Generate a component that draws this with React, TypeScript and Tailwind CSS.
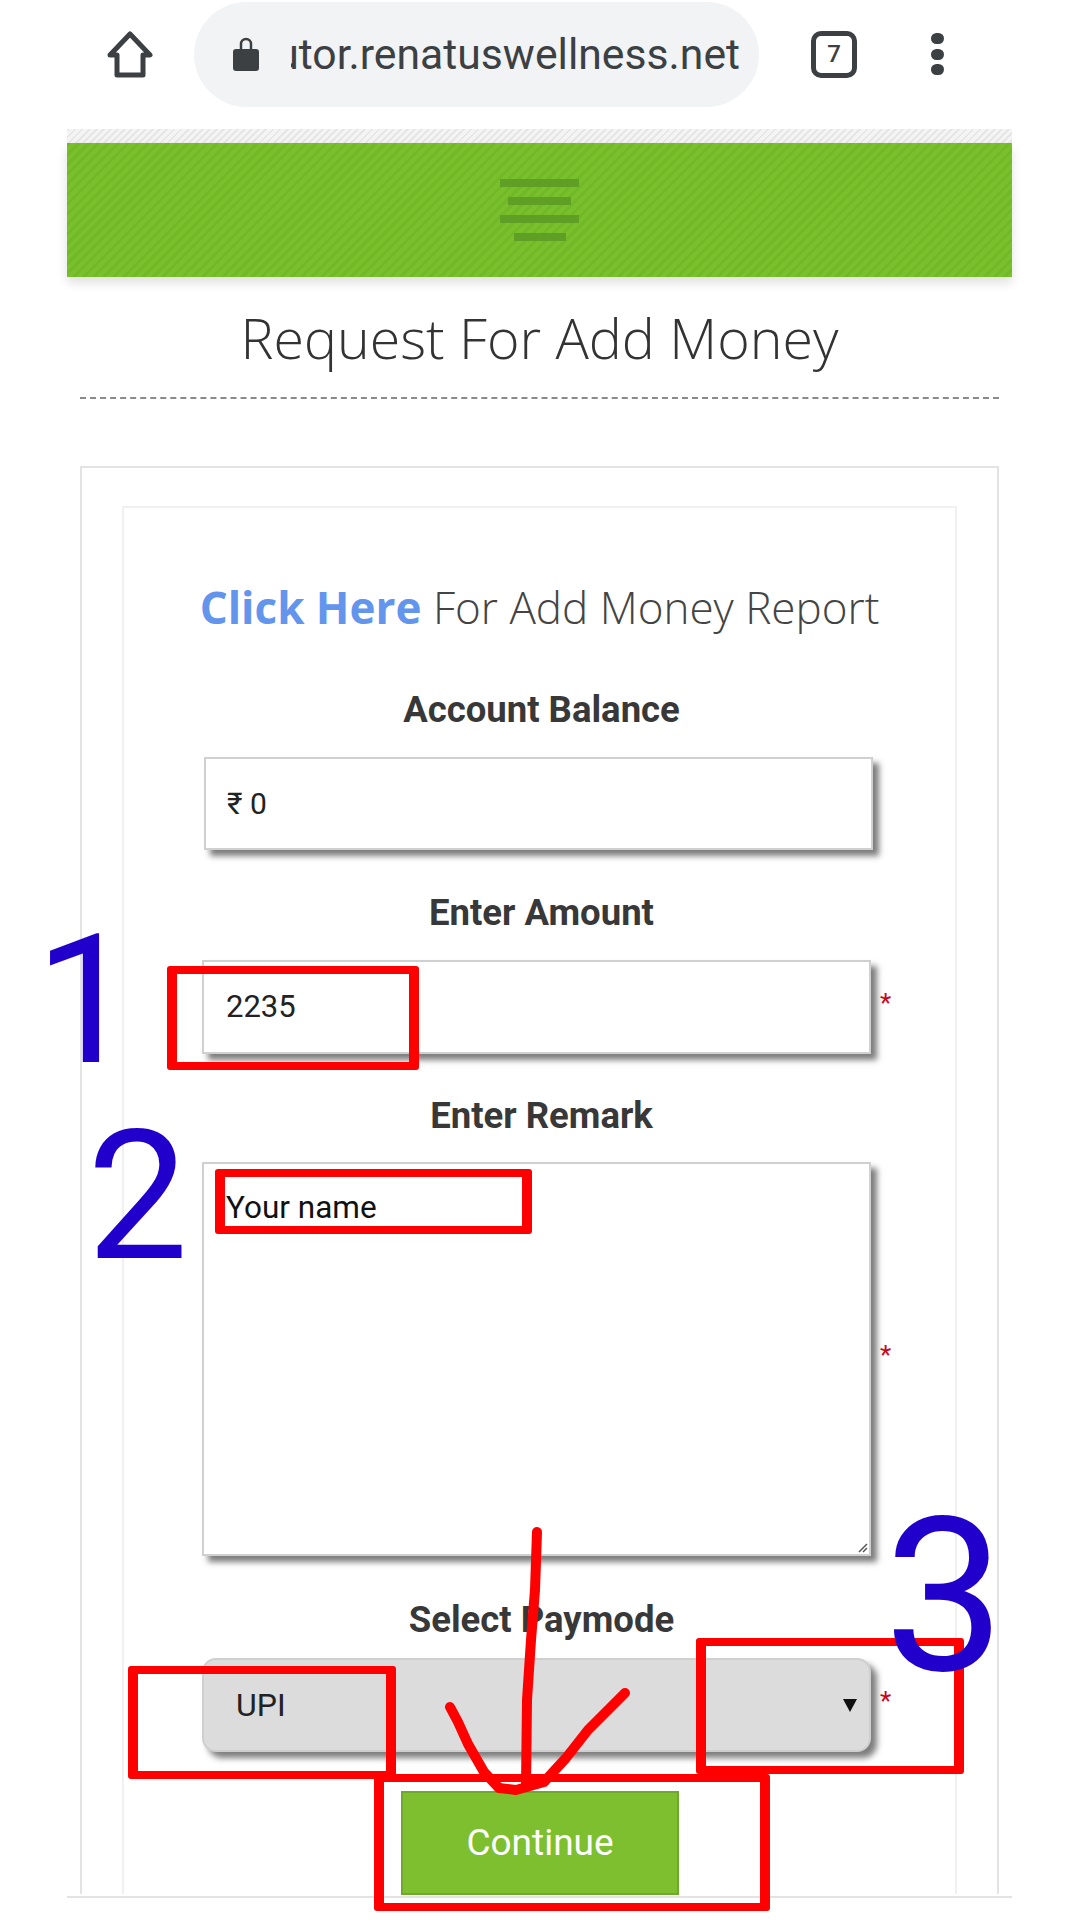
import React from 'react';

const FieldLabel = ({ text }: { text: string }) => (
  <div className="h-10 pl-[4px] text-center text-[36.5px] leading-10 font-bold text-[#383838]">{text}</div>
);

const Star = ({ className }: { className: string }) => (
  <span className={`absolute left-[678px] text-[26px] leading-none text-[#d0021b] ${className}`}>*</span>
);

const RedBox = ({ className }: { className: string }) => (
  <div className={`absolute border-x-[10px] border-y-[8px] border-[#ff0000] rounded-[3px] ${className}`} />
);

const App: React.FC = () => {
  return (
    <div className="relative w-[1080px] h-[1920px] overflow-hidden bg-white font-['Roboto',sans-serif]">
      {/* browser bar */}
      <div className="flex h-[129px] items-center pl-[107px] pb-[21px] text-[#3c4043]">
        <svg width="46" height="48" viewBox="0 0 46 48" fill="none" stroke="#3c4043" strokeWidth="5" strokeLinejoin="round">
          <path d="M23 4 L43 25 H36 V45 H10 V25 H3 Z" />
        </svg>
        <div className="ml-[41px] flex h-[105px] w-[565px] items-center overflow-hidden rounded-full bg-[#f1f3f4] pl-[38px]">
          <svg width="28" height="34" viewBox="0 0 28 34" className="shrink-0">
            <path d="M9 14 V7 a5 5 0 0 1 10 0 V14" fill="none" stroke="#3c4043" strokeWidth="2.5" />
            <rect x="1" y="12" width="26" height="22" rx="3" fill="#3c4043" />
          </svg>
          <div className="relative ml-[31px] h-[50px] w-[449px] overflow-hidden">
            <span className="absolute right-0 top-0 text-[42.7px] leading-[50px] whitespace-nowrap">utor.renatuswellness.net</span>
          </div>
        </div>
        <div className="ml-[52px] flex h-[47px] w-[46px] items-center justify-center rounded-[10px] border-[5px] border-[#3c4043] text-[24px] font-medium">7</div>
        <div className="ml-[74px] flex h-[42px] w-[14px] flex-col justify-between">
          <div className="h-[11px] w-[13px] rounded-full bg-[#3c4043]" />
          <div className="h-[11px] w-[13px] rounded-full bg-[#3c4043]" />
          <div className="h-[11px] w-[13px] rounded-full bg-[#3c4043]" />
        </div>
      </div>

      {/* page */}
      <div className="ml-[67px] w-[945px]">
        <div className="h-[14px] bg-[#eeeeee] bg-[repeating-linear-gradient(135deg,#e6e6e6_0px,#e6e6e6_2px,#f4f4f4_2px,#f4f4f4_5px)]" />
        <div className="flex h-[134px] flex-col items-center justify-center gap-[10px] bg-[#76bd2a] bg-[repeating-linear-gradient(135deg,#72b928_0px,#72b928_3px,#7ac02d_3px,#7ac02d_7px)] shadow-[0_6px_10px_rgba(0,0,0,0.12)]">
          <div className="h-2 w-[79px] bg-[#5f9f25]" />
          <div className="h-2 w-[63px] bg-[#5f9f25]" />
          <div className="h-2 w-[79px] bg-[#5f9f25]" />
          <div className="h-2 w-[52px] bg-[#5f9f25]" />
        </div>

        <h1 className="mt-[21px] h-[80px] text-center font-['Open_Sans',sans-serif] text-[55.5px] leading-[80px] font-light text-[#333333]">Request For Add Money</h1>
        <div className="mx-[13px] mt-[19px] border-b-2 border-dashed border-[#8a8a8a]" />

        <div className="mx-[13px] mt-[67px] h-[1428px] border-x-2 border-t-2 border-[#e3e3e3]">
          <div className="mx-[40px] mt-[38px] h-[1388px] border-x-2 border-t-2 border-[#f0f0f0] pt-[74px]">
            <div className="h-[50px] text-center font-['Open_Sans',sans-serif] text-[44px] leading-[50px] font-light text-[#444444] whitespace-nowrap">
              <span className="font-bold text-[#6495ed]">Click Here</span> For Add Money Report
            </div>

            <div className="mt-[58px]">
              <FieldLabel text="Account Balance" />
            </div>
            <div className="relative ml-[80px] mt-[27px] flex h-[93px] w-[669px] items-center border-2 border-[#d0d0d0] pl-[21px] text-[30px] text-[#222222] shadow-[6px_6px_6px_#7d7d7d]">₹ 0</div>

            <div className="mt-[43px]">
              <FieldLabel text="Enter Amount" />
            </div>
            <div className="relative ml-[78px] mt-[27px] h-[94px] w-[669px]">
              <div className="flex h-full items-center border-2 border-[#d0d0d0] pl-[22px] text-[31px] text-[#222222] shadow-[6px_6px_6px_#7d7d7d]">2235</div>
              <Star className="top-[30px]" />
            </div>

            <div className="mt-[42px]">
              <FieldLabel text="Enter Remark" />
            </div>
            <div className="relative ml-[78px] mt-[26px] h-[394px] w-[669px]">
              <div className="h-full border-2 border-[#d0d0d0] pl-[22px] pt-[26px] text-[31.5px] leading-[36px] text-[#111111] shadow-[6px_6px_6px_#7d7d7d]">Your name</div>
              <Star className="top-[180px]" />
              <svg width="10" height="10" viewBox="0 0 10 10" className="absolute bottom-[3px] right-[3px]" stroke="#555555" strokeWidth="1.5">
                <path d="M9 1 L1 9 M9 5 L5 9" />
              </svg>
            </div>

            <div className="mt-[44px]">
              <FieldLabel text="Select Paymode" />
            </div>
            <div className="relative ml-[78px] mt-[18px] h-[94px] w-[669px]">
              <div className="flex h-full items-center justify-between rounded-[14px] border-2 border-[#cfcfcf] bg-[#dcdcdc] pl-[32px] pr-[12px] text-[32px] text-[#222222] shadow-[6px_6px_6px_#7d7d7d]">
                <span>UPI</span>
                <span className="h-0 w-0 border-x-[7px] border-t-[13px] border-x-transparent border-t-[#111111]" />
              </div>
              <Star className="top-[30px]" />
            </div>

            <div className="ml-[277px] mt-[39px] flex h-[104px] w-[278px] items-center justify-center border-2 border-[#6ea82c] bg-[#7ebf2f] text-[37px] text-white">Continue</div>
          </div>
        </div>
      </div>

      {/* footer rule */}
      <div className="absolute left-[67px] top-[1896px] h-[2px] w-[945px] bg-[#e3e3e3]" />

      {/* hand drawn notes on top of the shot */}
      <RedBox className="left-[167px] top-[966px] h-[104px] w-[252px]" />
      <RedBox className="left-[215px] top-[1169px] h-[65px] w-[317px]" />
      <RedBox className="left-[128px] top-[1666px] h-[113px] w-[268px]" />
      <RedBox className="left-[696px] top-[1638px] h-[136px] w-[268px]" />
      <RedBox className="left-[374px] top-[1774px] h-[137px] w-[396px]" />

      <svg className="absolute left-0 top-0" width="1080" height="1920" fill="none" stroke="#ff0000" strokeWidth="10" strokeLinecap="round" strokeLinejoin="round">
        <path d="M537 1532 L535 1590 L531 1640 L527 1700 L526 1786" />
        <path d="M450 1707 L458 1722 L468 1744 L484 1772 L499 1788 L516 1790 L544 1782 L566 1758 L588 1730 L610 1708 L625 1693" />
      </svg>

      <span className="absolute left-[35px] top-[896px] text-[180px] leading-[210px] text-[#2200cc]">1</span>
      <span className="absolute left-[87px] top-[1092px] text-[180px] leading-[210px] text-[#2200cc]">2</span>
      <span className="absolute left-[884px] top-[1472px] text-[215px] leading-[250px] text-[#2200cc]">3</span>
    </div>
  );
};

export default App;
